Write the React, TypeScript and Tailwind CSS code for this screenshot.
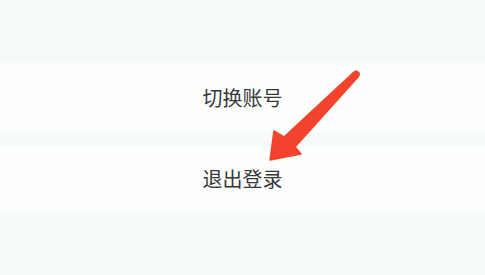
const cjk = { fontFamily: '"Noto Sans CJK SC", "Noto Sans", sans-serif' };

function Arrow() {
  return (
    <svg
      className="absolute left-0 top-0 pointer-events-none"
      width="485"
      height="275"
      viewBox="0 0 485 275"
    >
      <path
        d="M354 72 Q357 70 359 73 Q360 75 358 77 L295 147 L301 154 L270 160 L274 131 L284 137 Z"
        fill="#f4432d"
        stroke="#f4432d"
        strokeWidth="1.5"
        strokeLinejoin="round"
      />
    </svg>
  );
}

export default function App() {
  return (
    <div className="relative w-[485px] h-[275px] bg-[#f7fafb] flex flex-col overflow-hidden" style={cjk}>
      <div className="h-[63px]" />
      <button className="h-[70px] bg-[#fdfefe] flex items-center justify-center text-[20px] text-[#383838]">
        切换账号
      </button>
      <div className="h-[13px]" />
      <button className="h-[65px] bg-[#fdfefe] flex items-center justify-center text-[20px] text-[#383838]">
        退出登录
      </button>
      <div className="flex-1" />
      <Arrow />
    </div>
  );
}
